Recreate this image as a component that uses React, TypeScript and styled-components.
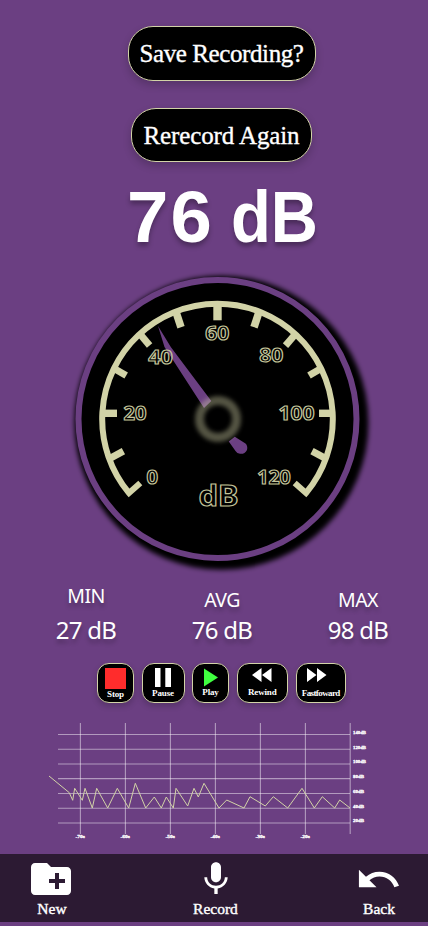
import React from "react";
import styled, { createGlobalStyle } from "styled-components";
import { MdCreateNewFolder, MdMic, MdUndo } from "react-icons/md";

const PURPLE = "#6b3f82";
const CREAM = "#d2d3a7";
const SERIF = '"Liberation Serif", "Times New Roman", serif';
const SANS = '"Noto Sans", "Open Sans", sans-serif';

const GlobalStyle = createGlobalStyle`
  *, *::before, *::after { box-sizing: border-box; }
  html, body { margin: 0; padding: 0; background: ${PURPLE}; }
  button { font: inherit; color: inherit; margin: 0; padding: 0; }
`;

const Screen = styled.main`
  width: 428px;
  height: 926px;
  overflow: hidden;
  display: flex;
  flex-direction: column;
  background: ${PURPLE};
  color: #fff;
  font-family: ${SERIF};
`;

const Actions = styled.section`
  display: flex;
  flex-direction: column;
  align-items: center;
  gap: 27px;
  padding: 26px 0 0 15px;
`;

const PillButton = styled.button<{ $width: number; $spacing: number }>`
  && {
    width: ${(p) => p.$width}px;
    height: 54.5px;
    border: 1px solid ${CREAM};
    border-radius: 25px;
    background: #000;
    font-size: 25px;
    line-height: 53px;
    letter-spacing: ${(p) => p.$spacing}px;
    white-space: nowrap;
    -webkit-text-stroke: 0.35px #fff;
    box-shadow: 0 4px 8px rgba(0, 0, 0, 0.2);
  }
`;

const Reading = styled.h1`
  display: flex;
  margin: 11px 0 0;
  padding-left: 127px;
  gap: 19px;
  height: 88px;
  font: 700 72.5px/88px "Liberation Sans", Arial, sans-serif;
  white-space: nowrap;
  text-shadow: 0 4px 5px rgba(0, 0, 0, 0.3);
`;

const Digits = styled.span`
  letter-spacing: 2px;
  transform: scaleX(1.025);
  transform-origin: left center;
`;

const Unit = styled.span`
  transform: scaleX(0.9);
  transform-origin: left center;
`;

const Gauge = styled.svg`
  display: block;
  flex: none;
  width: 320px;
  height: 316px;
  margin-left: 60px;
  margin-top: -1px;
`;

const Stats = styled.section`
  display: grid;
  grid-template-columns: 90px 90px 90px;
  column-gap: 46px;
  height: 87px;
  padding: 5px 0 0 41px;
`;

const Stat = styled.div<{ $top: number; $gap: number }>`
  display: flex;
  flex-direction: column;
  align-items: center;
  gap: ${(p) => p.$gap}px;
  padding-top: ${(p) => p.$top}px;
  font-family: ${SANS};
  text-shadow: 0 4px 4px rgba(0, 0, 0, 0.25);
`;

const StatLabel = styled.span`
  font-size: 19.5px;
  line-height: 24px;
  letter-spacing: -0.6px;
`;

const StatValue = styled.span`
  font-size: 24px;
  line-height: 30px;
  letter-spacing: -0.7px;
  white-space: nowrap;
`;

const Controls = styled.section`
  display: flex;
  gap: 7.5px;
  height: 40px;
  margin: 0 0 0 97px;
`;

const ControlButton = styled.button<{ $width: number; $gap: number }>`
  && {
    display: flex;
    flex: none;
    flex-direction: column;
    align-items: center;
    width: ${(p) => p.$width}px;
    height: 40px;
    padding-top: ${(p) => p.$gap}px;
    border: 1px solid ${CREAM};
    border-radius: 12px;
    background: #000;
    box-shadow: 0 3px 6px rgba(0, 0, 0, 0.2);
  }
  svg { display: block; flex: none; }
`;

const ControlLabel = styled.span<{ $offset: number; $spacing?: number }>`
  margin-top: ${(p) => p.$offset}px;
  font-size: 9px;
  line-height: 10px;
  font-weight: 700;
  letter-spacing: ${(p) => p.$spacing ?? -0.15}px;
  white-space: nowrap;
`;

const Chart = styled.svg`
  display: block;
  flex: none;
  width: 340px;
  height: 151px;
  margin-left: 40px;
`;

const NavBar = styled.nav`
  display: flex;
  justify-content: space-between;
  flex: none;
  height: 68px;
  padding: 0 19px 0 22px;
  background: #2c1a33;
`;

const NavItem = styled.button`
  && {
    display: flex;
    flex-direction: column;
    align-items: center;
    width: 60px;
    border: 0;
    background: none;
  }
`;

const NavIcon = styled.span<{ $nudge?: number }>`
  display: flex;
  align-items: center;
  justify-content: center;
  height: 46px;
  padding-top: 4px;
  margin-right: ${(p) => p.$nudge ?? 0}px;
  svg { display: block; flex: none; }
`;

const NavLabel = styled.span`
  font-size: 15.5px;
  line-height: 18px;
  -webkit-text-stroke: 0.4px #fff;
`;

const ticks = [
  [217.5, 304, 217.5, 320.3, 8.4],
  [102, 413.3, 117, 413.3, 7.4],
  [333, 413.3, 319, 413.3, 7.4],
  [176, 312, 181, 327.2, 7.6],
  [259, 312, 254, 327.2, 7.6],
  [140, 334, 149.6, 345.6, 7],
  [295.5, 334, 285.5, 345.6, 7],
  [114, 368.5, 126.2, 375.5, 7],
  [321, 368.5, 309, 375.5, 7],
  [110, 458.4, 123.4, 451.2, 7],
  [325.5, 458.4, 312, 451.2, 7],
];

const dialLabels: [string, number, number, number][] = [
  ["0", 152.2, 484, 11.5],
  ["20", 135, 419.8, 23],
  ["40", 160.4, 363.6, 24.5],
  ["60", 217.2, 339.8, 24],
  ["80", 271.2, 362.2, 24],
  ["100", 296.5, 419.8, 36],
  ["120", 274, 484, 33.5],
];

function Dial() {
  return (
    <Gauge viewBox="60 260 320 316">
      <defs>
        <filter id="shade" x="-20%" y="-20%" width="140%" height="140%">
          <feGaussianBlur stdDeviation="2.8" />
        </filter>
        <filter id="haze" x="-40%" y="-40%" width="180%" height="180%">
          <feGaussianBlur stdDeviation="2" />
        </filter>
      </defs>
      <circle cx="221.5" cy="422.8" r="147" filter="url(#shade)" />
      <circle cx="217.5" cy="419" r="139" fill="#000" stroke={PURPLE} strokeWidth="6" />
      <path
        d="M140.3 483L129 493A115.3 115.3 0 1 1 306 493L294.7 483"
        fill="none"
        stroke={CREAM}
        strokeWidth="6"
      />
      {ticks.map(([x1, y1, x2, y2, w], i) => (
        <line key={i} x1={x1} y1={y1} x2={x2} y2={y2} stroke={CREAM} strokeWidth={w} />
      ))}
      <path d="M158 326L170.8 347L211.3 401L204 408L164.5 347Z" fill={PURPLE} />
      <path
        d="M228.8 441.5L234.8 436.7L245.5 443.5Q248 446 247 450Q244.5 454.4 240 453.8Q237 453.5 235.5 451Z"
        fill={PURPLE}
      />
      <circle
        cx="218"
        cy="419"
        r="18.5"
        fill="none"
        stroke={CREAM}
        strokeOpacity="0.4"
        strokeWidth="9"
        filter="url(#haze)"
      />
      <g
        fill="none"
        stroke="#c3c49a"
        strokeWidth="1.2"
        textAnchor="middle"
        fontFamily={SANS}
        fontWeight="700"
      >
        {dialLabels.map(([text, x, y, w]) => (
          <text key={text} x={x} y={y} fontSize="20" textLength={w} lengthAdjust="spacingAndGlyphs">
            {text}
          </text>
        ))}
        <text x="218.5" y="505.5" fontSize="29" textLength="40" lengthAdjust="spacingAndGlyphs">
          dB
        </text>
      </g>
    </Gauge>
  );
}

const levels: [string, number][] = [
  ["140dB", 734.5],
  ["120dB", 749.2],
  ["100dB", 764],
  ["80dB", 778.6],
  ["60dB", 793.5],
  ["40dB", 808.3],
  ["20dB", 823],
];

const times: [string, number][] = [
  ["-70s", 80.4],
  ["-60s", 125.4],
  ["-50s", 170.4],
  ["-40s", 215.4],
  ["-30s", 260.4],
  ["-20s", 305.4],
  ["", 350.2],
];

const trace =
  "49,776 69.3,792.7 72.7,800.3 74.7,788.3 82.3,800.3 85,788.3 92.3,808 96.7,788.3 107.7,808 117.3,788.3 128.7,808 135.3,783.3 145.7,808 154.3,797 161.3,808 166.3,797 173.3,808 176,788.3 187.7,806 194,788.3 198.3,797 204,783.3 219,808 226.7,800 244,808 250,796.7 265.3,806 273.3,796.7 287.7,808 302,788.3 314.3,808 322.3,796.7 334.7,808 339.7,800 350,808";

function History() {
  return (
    <Chart viewBox="40 703 340 151">
      <g stroke="#fff" strokeOpacity="0.48" strokeWidth="1.1">
        {levels.map(([label, y]) => (
          <line key={label} x1="58" x2="350" y1={y} y2={y} />
        ))}
        {times.map(([label, x]) => (
          <line key={x} x1={x} x2={x} y1="723" y2="834" />
        ))}
      </g>
      <polyline points={trace} fill="none" stroke={CREAM} strokeWidth="1" />
      <g fill="#fff" fontFamily={SERIF} fontWeight="700" fontSize="4.6" stroke="#fff" strokeWidth="0.3">
        {levels.map(([label, y]) => (
          <text key={label} x="353" y={y - 0.6} textLength={label.length > 4 ? 13 : 11} lengthAdjust="spacingAndGlyphs">
            {label}
          </text>
        ))}
        {times.map(([label, x]) =>
          label ? (
            <text key={label} x={x - 5} y="838.3" textLength="9.5" lengthAdjust="spacingAndGlyphs">
              {label}
            </text>
          ) : null
        )}
      </g>
    </Chart>
  );
}

export default function App() {
  return (
    <>
      <GlobalStyle />
      <Screen>
        <Actions>
          <PillButton $width={188} $spacing={-0.4}>Save Recording?</PillButton>
          <PillButton $width={181} $spacing={-0.12}>Rerecord Again</PillButton>
        </Actions>
        <Reading>
          <Digits>76</Digits>
          <Unit>dB</Unit>
        </Reading>
        <Dial />
        <Stats>
          <Stat $top={3} $gap={7}>
            <StatLabel>MIN</StatLabel>
            <StatValue>27 dB</StatValue>
          </Stat>
          <Stat $top={7} $gap={3}>
            <StatLabel>AVG</StatLabel>
            <StatValue>76 dB</StatValue>
          </Stat>
          <Stat $top={7} $gap={3}>
            <StatLabel>MAX</StatLabel>
            <StatValue>98 dB</StatValue>
          </Stat>
        </Stats>
        <Controls>
          <ControlButton $width={37} $gap={4}>
            <svg width="21" height="21"><rect width="21" height="21" fill="#ff2c2c" /></svg>
            <ControlLabel $offset={0}>Stop</ControlLabel>
          </ControlButton>
          <ControlButton $width={43} $gap={4}>
            <svg width="16" height="19"><path d="M0 0H5.5V19H0ZM10.3 0H16V19H10.3Z" fill="#fff" /></svg>
            <ControlLabel $offset={1}>Pause</ControlLabel>
          </ControlButton>
          <ControlButton $width={37} $gap={4}>
            <svg width="14" height="19"><path d="M0 .5L14 9.5L0 18.5Z" fill="#40ff40" /></svg>
            <ControlLabel $offset={0}>Play</ControlLabel>
          </ControlButton>
          <ControlButton $width={51.5} $gap={4}>
            <svg width="20" height="14"><path d="M9.5 0V14L0 7ZM19.5 0V14L10 7Z" fill="#fff" /></svg>
            <ControlLabel $offset={5}>Rewind</ControlLabel>
          </ControlButton>
          <ControlButton $width={50.5} $gap={4}>
            <svg width="28" height="14"><path d="M0 0V14L9.5 7ZM10 0V14L19.5 7Z" fill="#fff" /></svg>
            <ControlLabel $offset={6} $spacing={-0.6}>Fastfoward</ControlLabel>
          </ControlButton>
        </Controls>
        <History />
        <NavBar>
          <NavItem>
            <NavIcon $nudge={2}><MdCreateNewFolder size={48} /></NavIcon>
            <NavLabel>New</NavLabel>
          </NavItem>
          <NavItem>
            <NavIcon><MdMic size={40} /></NavIcon>
            <NavLabel>Record</NavLabel>
          </NavItem>
          <NavItem>
            <NavIcon $nudge={2}><MdUndo size={47} /></NavIcon>
            <NavLabel>Back</NavLabel>
          </NavItem>
        </NavBar>
      </Screen>
    </>
  );
}
